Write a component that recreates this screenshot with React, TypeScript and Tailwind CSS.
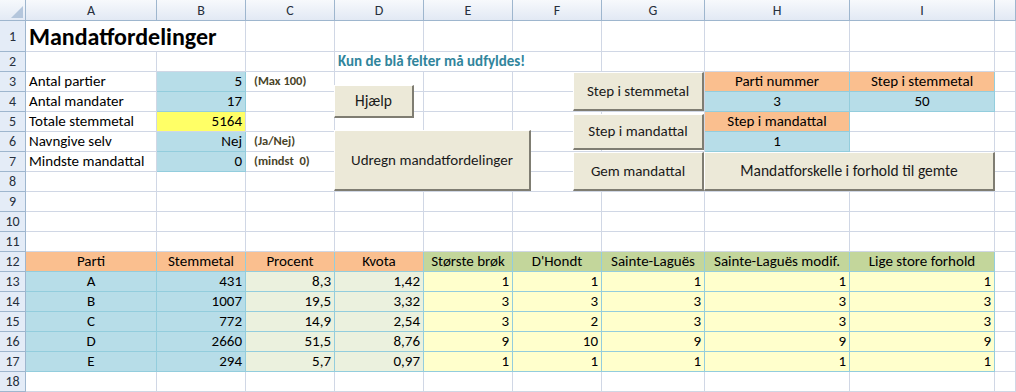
import React from "react";

type Fill = "none" | "blue" | "orange" | "green" | "lgreen" | "lyellow" | "yellow";

interface Cell {
  t?: string;
  a?: "l" | "c" | "r";
  f?: Fill;
  span?: number;
  kind?: "title" | "hint" | "note";
}

const fills: Record<Fill, string> = {
  none: "bg-white border-[#d0d7e5]",
  blue: "bg-[#b7dde8] border-[#93cddd]",
  orange: "bg-[#fabf8f] border-[#93cddd]",
  green: "bg-[#c3d69b] border-[#93cddd]",
  lgreen: "bg-[#ebf1de] border-[#93cddd]",
  lyellow: "bg-[#ffffcc] border-[#93cddd]",
  yellow: "bg-[#ffff66] border-[#d0d7e5]",
};

const aligns = { l: "justify-start", c: "justify-center", r: "justify-end" };
const spans: Record<number, string> = { 1: "", 2: "col-span-2", 3: "col-span-3" };

const kinds = {
  title: "text-[24px] font-bold leading-[26px] pb-0",
  hint: "text-[15px] font-bold text-[#31859c] pb-0",
  note: "text-[12.5px] font-bold text-[#494429] pl-[8px]",
};

const columns = ["A", "B", "C", "D", "E", "F", "G", "H", "I", ""];

const blank = (n = 10): Cell[] => Array.from({ length: n }, () => ({}));

const parties = [
  ["A", "431", "8,3", "1,42", "1", "1", "1", "1", "1"],
  ["B", "1007", "19,5", "3,32", "3", "3", "3", "3", "3"],
  ["C", "772", "14,9", "2,54", "3", "2", "3", "3", "3"],
  ["D", "2660", "51,5", "8,76", "9", "10", "9", "9", "9"],
  ["E", "294", "5,7", "0,97", "1", "1", "1", "1", "1"],
];

const headings: Cell[] = [
  { t: "Parti", f: "orange", a: "c" },
  { t: "Stemmetal", f: "orange", a: "c" },
  { t: "Procent", f: "orange", a: "c" },
  { t: "Kvota", f: "orange", a: "c" },
  { t: "Største brøk", f: "green", a: "c" },
  { t: "D'Hondt", f: "green", a: "c" },
  { t: "Sainte-Laguës", f: "green", a: "c" },
  { t: "Sainte-Laguës modif.", f: "green", a: "c" },
  { t: "Lige store forhold", f: "green", a: "c" },
  {},
];

const sheet: Cell[][] = [
  [{ t: "Mandatfordelinger", span: 2, kind: "title" }, ...blank(8)],
  [{}, {}, {}, { t: "Kun de blå felter må udfyldes!", span: 3, kind: "hint" }, {}, {}, {}, {}],
  [
    { t: "Antal partier" },
    { t: "5", f: "blue", a: "r" },
    { t: "(Max 100)", kind: "note" },
    {}, {}, {}, {},
    { t: "Parti nummer", f: "orange", a: "c" },
    { t: "Step i stemmetal", f: "orange", a: "c" },
    {},
  ],
  [
    { t: "Antal mandater" },
    { t: "17", f: "blue", a: "r" },
    {}, {}, {}, {}, {},
    { t: "3", f: "blue", a: "c" },
    { t: "50", f: "blue", a: "c" },
    {},
  ],
  [
    { t: "Totale stemmetal" },
    { t: "5164", f: "yellow", a: "r" },
    {}, {}, {}, {}, {},
    { t: "Step i mandattal", f: "orange", a: "c" },
    {}, {},
  ],
  [
    { t: "Navngive selv" },
    { t: "Nej", f: "blue", a: "r" },
    { t: "(Ja/Nej)", kind: "note" },
    {}, {}, {}, {},
    { t: "1", f: "blue", a: "c" },
    {}, {},
  ],
  [
    { t: "Mindste mandattal" },
    { t: "0", f: "blue", a: "r" },
    { t: "(mindst  0)", kind: "note" },
    ...blank(7),
  ],
  blank(),
  blank(),
  blank(),
  blank(),
  headings,
  ...parties.map((p) => [
    { t: p[0], f: "blue", a: "c" } as Cell,
    { t: p[1], f: "blue", a: "r" } as Cell,
    { t: p[2], f: "lgreen", a: "r" } as Cell,
    { t: p[3], f: "lgreen", a: "r" } as Cell,
    ...p.slice(4).map((v) => ({ t: v, f: "lyellow", a: "r" }) as Cell),
    {},
  ]),
  blank(),
];

const buttons = [
  { label: "Hjælp", pos: "left-[334px] top-[85px] w-[80px] h-[33px] text-[15.5px]" },
  { label: "Step i stemmetal", pos: "left-[573px] top-[72px] w-[131px] h-[39px] text-[15px]" },
  { label: "Step i mandattal", pos: "left-[573px] top-[114px] w-[131px] h-[36px] text-[15px]" },
  { label: "Gem mandattal", pos: "left-[573px] top-[152px] w-[131px] h-[39px] text-[15px]" },
  { label: "Udregn mandatfordelinger", pos: "left-[334px] top-[130px] w-[197px] h-[61px] text-[15px]" },
  { label: "Mandatforskelle i forhold til gemte", pos: "left-[704px] top-[152px] w-[291px] h-[39px] text-[15.5px]" },
];

const SheetCell: React.FC<{ cell: Cell }> = ({ cell }) => {
  const fill = fills[cell.f ?? "none"];
  const kind = cell.kind ? kinds[cell.kind] : "";
  return (
    <div
      className={`flex items-end overflow-visible whitespace-pre border-r border-b px-[3px] pb-[1px] leading-[18px] ${fill} ${
        aligns[cell.a ?? "l"]
      } ${spans[cell.span ?? 1]} ${kind}`}
    >
      {cell.t}
    </div>
  );
};

const Corner = () => (
  <div className="relative border-r border-b border-[#9eb6ce] bg-linear-to-b from-[#f6f9fc] to-[#e3eaf5]">
    <svg className="absolute right-[2px] bottom-[2px]" width="12" height="12" viewBox="0 0 12 12">
      <polygon points="12,0 12,12 0,12" fill="#b4c6dc" />
    </svg>
  </div>
);

export default function App() {
  return (
    <div className="relative w-[1016px] h-[392px] overflow-hidden bg-white font-[Carlito,Lato,sans-serif] text-[15px] text-black">
      <div className="grid grid-cols-[26px_131px_89px_89px_89px_89px_89px_103px_145px_145px_21px] grid-rows-[21px_31px_repeat(17,20px)]">
        <Corner />
        {columns.map((c, i) => (
          <div
            key={i}
            className="flex items-center justify-center border-r border-b border-[#9eb6ce] bg-linear-to-b from-[#f7f9fc] to-[#e2e9f4] text-[14px] text-[#27303d]"
          >
            {c}
          </div>
        ))}
        {sheet.map((row, r) => (
          <React.Fragment key={r}>
            <div className="flex items-center justify-center border-r border-b border-[#9eb6ce] bg-[#e4ecf7] text-[14px] text-[#27303d]">
              {r + 1}
            </div>
            {row.map((cell, i) => (
              <SheetCell key={i} cell={cell} />
            ))}
          </React.Fragment>
        ))}
      </div>

      {buttons.map((b) => (
        <button
          key={b.label}
          type="button"
          className={`absolute flex items-center justify-center bg-[#ece9d8] border-t border-l border-t-white border-l-white border-r-2 border-b-2 border-r-[#7f7d72] border-b-[#7f7d72] text-[#1a1a1a] ${b.pos}`}
        >
          {b.label}
        </button>
      ))}
    </div>
  );
}
